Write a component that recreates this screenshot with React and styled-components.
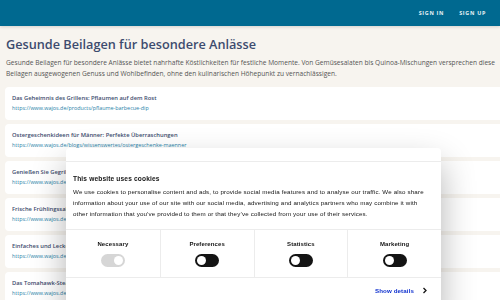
import React from 'react';
import styled, { createGlobalStyle } from 'styled-components';

const GlobalStyle = createGlobalStyle`
  body {
    margin: 0;
    background-color: #f7f4ef;
    font-family: 'Open Sans', sans-serif;
    overflow: hidden;
  }
`;

const Header = styled.header`
  height: 26px;
  background-color: #006990;
  display: flex;
  justify-content: flex-end;
  align-items: center;
  padding-right: 14px;
  gap: 15px;
  box-shadow: 0 1px 3px rgba(0, 0, 0, 0.15);
`;

const NavLink = styled.span`
  color: #e6f1f5;
  font-size: 5.4px;
  font-weight: 700;
  letter-spacing: 0.7px;
`;

const Main = styled.main`
  padding: 9px 0 0 6px;
  width: 510px;
`;

const Title = styled.h1`
  margin: 0;
  font-size: 12.7px;
  font-weight: 600;
  color: #3d4b6e;
  line-height: 19px;
`;

const Intro = styled.p`
  margin: 3px 0 8px;
  font-size: 6.6px;
  line-height: 11px;
  color: #555;
  width: 495px;
`;

const CardList = styled.div`
  display: flex;
  flex-direction: column;
  gap: 4px;
  margin-left: -1px;
`;

const Card = styled.div`
  background: #fff;
  border-radius: 4px;
  height: 33px;
  padding: 6px 0 0 7px;
  box-sizing: border-box;
`;

const CardTitle = styled.div`
  font-size: 5.8px;
  font-weight: 600;
  color: #3d4b6e;
  line-height: 10px;
`;

const CardLink = styled.div`
  font-size: 5.4px;
  color: #2a7fa8;
  line-height: 10px;
`;

const Dialog = styled.div`
  position: fixed;
  left: 66px;
  top: 148px;
  width: 375px;
  height: 170px;
  background: #fff;
  border-radius: 4px 4px 0 0;
  box-shadow: 0 16px 34px rgba(0, 0, 0, 0.3);
  font-family: 'Liberation Sans', Arial, sans-serif;
  color: #141414;
  display: flex;
  flex-direction: column;
`;

const DialogHeader = styled.div`
  height: 13px;
  border-bottom: 1px solid #ececec;
`;

const DialogBody = styled.div`
  padding: 12px 7px 10px;
  border-bottom: 1px solid #ececec;
`;

const DialogTitle = styled.h2`
  margin: 0 0 2px;
  font-size: 6.6px;
  font-weight: 700;
  letter-spacing: 0.15px;
  line-height: 10px;
`;

const DialogText = styled.p`
  margin: 0;
  font-size: 6.2px;
  letter-spacing: 0.15px;
  line-height: 11px;
`;

const Options = styled.div`
  display: grid;
  grid-template-columns: repeat(4, 1fr);
  height: 47px;
  border-bottom: 1px solid #ececec;
`;

const Option = styled.div`
  display: flex;
  flex-direction: column;
  align-items: center;
  justify-content: center;
  gap: 7px;
  padding-top: 1px;
  border-left: ${({ $first }) => ($first ? 'none' : '1px solid #ececec')};
`;

const OptionLabel = styled.span`
  font-size: 6px;
  font-weight: 700;
  letter-spacing: 0.1px;
`;

const Toggle = styled.span`
  position: relative;
  width: 24px;
  height: 13px;
  border-radius: 7px;
  background: ${({ $disabled }) => ($disabled ? '#d6d6d6' : '#141414')};

  &::after {
    content: '';
    position: absolute;
    top: 2px;
    left: ${({ $disabled }) => ($disabled ? '13px' : '2px')};
    width: 9px;
    height: 9px;
    border-radius: 50%;
    background: #fff;
  }
`;

const Footer = styled.div`
  display: flex;
  justify-content: flex-end;
  align-items: center;
  padding: 9px 13px 0 0;
  gap: 8px;
`;

const Details = styled.span`
  color: #1032cf;
  font-size: 6.2px;
  font-weight: 700;
  letter-spacing: 0.1px;
`;

const cards = [
  ['Das Geheimnis des Grillens: Pflaumen auf dem Rost', 'https://www.wajos.de/products/pflaume-barbecue-dip'],
  ['Ostergeschenkideen für Männer: Perfekte Überraschungen', 'https://www.wajos.de/blogs/wissenswertes/ostergeschenke-maenner'],
  ['Genießen Sie Gegrilltes', 'https://www.wajos.de/products'],
  ['Frische Frühlingssalate', 'https://www.wajos.de/products'],
  ['Einfaches und Leckeres', 'https://www.wajos.de/products'],
  ['Das Tomahawk-Steak', 'https://www.wajos.de/products'],
];

const options = ['Necessary', 'Preferences', 'Statistics', 'Marketing'];

export default function App() {
  return (
    <>
      <GlobalStyle />
      <Header>
        <NavLink>SIGN IN</NavLink>
        <NavLink>SIGN UP</NavLink>
      </Header>
      <Main>
        <Title>Gesunde Beilagen für besondere Anlässe</Title>
        <Intro>
          Gesunde Beilagen für besondere Anlässe bietet nahrhafte Köstlichkeiten für festliche Momente. Von
          Gemüsesalaten bis Quinoa-Mischungen versprechen diese Beilagen ausgewogenen Genuss und Wohlbefinden, ohne
          den kulinarischen Höhepunkt zu vernachlässigen.
        </Intro>
        <CardList>
          {cards.map(([title, link]) => (
            <Card key={title}>
              <CardTitle>{title}</CardTitle>
              <CardLink>{link}</CardLink>
            </Card>
          ))}
        </CardList>
      </Main>
      <Dialog>
        <DialogHeader />
        <DialogBody>
          <DialogTitle>This website uses cookies</DialogTitle>
          <DialogText>
            We use cookies to personalise content and ads, to provide social media features and to analyse our
            traffic. We also share information about your use of our site with our social media, advertising and
            analytics partners who may combine it with other information that you’ve provided to them or that
            they’ve collected from your use of their services.
          </DialogText>
        </DialogBody>
        <Options>
          {options.map((name, i) => (
            <Option key={name} $first={i === 0}>
              <OptionLabel>{name}</OptionLabel>
              <Toggle $disabled={i === 0} />
            </Option>
          ))}
        </Options>
        <Footer>
          <Details>Show details</Details>
          <svg width="6" height="7" viewBox="0 0 6 7">
            <path d="M1.5 1 L4 3.5 L1.5 6" stroke="#141414" strokeWidth="1.3" fill="none" />
          </svg>
        </Footer>
      </Dialog>
    </>
  );
}
